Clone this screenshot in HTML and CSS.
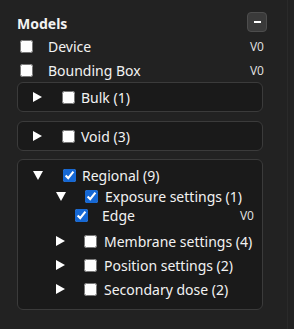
FILE: index.html
```html
<!DOCTYPE html>
<html lang="en">

<head>
  <meta charset="UTF-8">
  <meta name="viewport" content="width=device-width, initial-scale=1.0">
  <title>Models</title>
  <link rel="stylesheet" href="styles.css">
</head>

<body>
  <div class="panel">
    <!-- header -->
    <div class="header">
      <span class="title">Models</span>
      <span class="collapse"><span class="dash"></span></span>
    </div>

    <!-- top level models -->
    <div class="leaf top">
      <input type="checkbox">
      <span class="label">Device</span>
      <span class="ver">V0</span>
    </div>
    <div class="leaf top">
      <input type="checkbox">
      <span class="label">Bounding Box</span>
      <span class="ver">V0</span>
    </div>

    <!-- groups -->
    <div class="group bulk">
      <div class="node lvl1">
        <svg class="arrow" width="9" height="10" viewBox="0 0 9 10"><polygon points="0,0 9,5 0,10" fill="#fff"/></svg>
        <input type="checkbox">
        <span class="label">Bulk (1)</span>
      </div>
    </div>

    <div class="group void">
      <div class="node lvl1">
        <svg class="arrow" width="9" height="10" viewBox="0 0 9 10"><polygon points="0,0 9,5 0,10" fill="#fff"/></svg>
        <input type="checkbox">
        <span class="label">Void (3)</span>
      </div>
    </div>

    <div class="group regional">
      <div class="node lvl1 first">
        <svg class="arrow" width="10" height="9" viewBox="0 0 10 9"><polygon points="0,0 10,0 5,9" fill="#fff"/></svg>
        <input type="checkbox" checked>
        <span class="label">Regional (9)</span>
      </div>
      <div class="node lvl2 open">
        <svg class="arrow" width="10" height="9" viewBox="0 0 10 9"><polygon points="0,0 10,0 5,9" fill="#fff"/></svg>
        <input type="checkbox" checked>
        <span class="label">Exposure settings (1)</span>
      </div>
      <div class="leaf sub">
        <input type="checkbox" checked>
        <span class="label">Edge</span>
        <span class="ver">V0</span>
      </div>
      <div class="node lvl2 after">
        <svg class="arrow" width="9" height="10" viewBox="0 0 9 10"><polygon points="0,0 9,5 0,10" fill="#fff"/></svg>
        <input type="checkbox">
        <span class="label">Membrane settings (4)</span>
      </div>
      <div class="node lvl2">
        <svg class="arrow" width="9" height="10" viewBox="0 0 9 10"><polygon points="0,0 9,5 0,10" fill="#fff"/></svg>
        <input type="checkbox">
        <span class="label">Position settings (2)</span>
      </div>
      <div class="node lvl2">
        <svg class="arrow" width="9" height="10" viewBox="0 0 9 10"><polygon points="0,0 9,5 0,10" fill="#fff"/></svg>
        <input type="checkbox">
        <span class="label">Secondary dose (2)</span>
      </div>
    </div>
  </div>
</body>

</html>
```

FILE: styles.css
```css
* {
  margin: 0;
  padding: 0;
  box-sizing: border-box;
}

body {
  background: #222;
  color: #f2f2f2;
  font-family: "Noto Sans", "Open Sans", sans-serif;
  font-size: 14px;
}

/* panel */
.panel {
  width: 288px;
  height: 329px;
  padding: 12px 0 0 17px;
  border-right: 1px solid #2a2a2a;
}

.header {
  display: flex;
  justify-content: space-between;
  width: 250px;
  height: 22px;
}
.title {
  font-weight: bold;
  font-size: 14px;
  line-height: 24px;
}
.collapse {
  width: 20px;
  height: 20px;
  border: 1px solid #4d4d4d;
  border-radius: 4px;
  background: #3a3a3a;
  display: flex;
  align-items: center;
  justify-content: center;
}
.dash {
  width: 7px;
  height: 2px;
  background: #fff;
}

/* checkbox */
input[type="checkbox"] {
  width: 13px;
  height: 13px;
  margin: 0;
  flex: none;
  accent-color: #1668d4;
}

/* rows */
.leaf,
.node {
  display: flex;
  align-items: center;
}
.label {
  white-space: nowrap;
}
.ver {
  margin-left: auto;
  font-size: 12px;
  color: #ddd;
}

.leaf.top {
  width: 247px;
  height: 24px;
  padding-left: 3px;
}
.leaf.top .label {
  margin-left: 15px;
}

/* group boxes */
.group {
  width: 246px;
  background: #1a1a1a;
  border: 1px solid #3b3b3b;
  border-radius: 6px;
}
.bulk {
  margin-top: 0;
  height: 30px;
}
.void {
  margin-top: 9px;
  height: 30px;
}
.regional {
  margin-top: 8px;
  padding: 4px 8px 8px 0;
}

.arrow {
  flex: none;
}

.lvl1 {
  height: 28px;
  padding-left: 15px;
}
.lvl1 input {
  margin-left: 20px;
}
.lvl1 .label {
  margin-left: 6px;
}
.lvl1.first {
  height: 22px;
}

.lvl2 {
  height: 24px;
  padding-left: 38px;
}
.lvl2 input {
  margin-left: 19px;
}
.lvl2 .label {
  margin-left: 7px;
}
.lvl2.open {
  height: 20px;
}
.lvl2.after {
  margin-top: 5px;
}

.leaf.sub {
  height: 18px;
  padding-left: 57px;
}
.leaf.sub .label {
  margin-left: 14px;
}
```
